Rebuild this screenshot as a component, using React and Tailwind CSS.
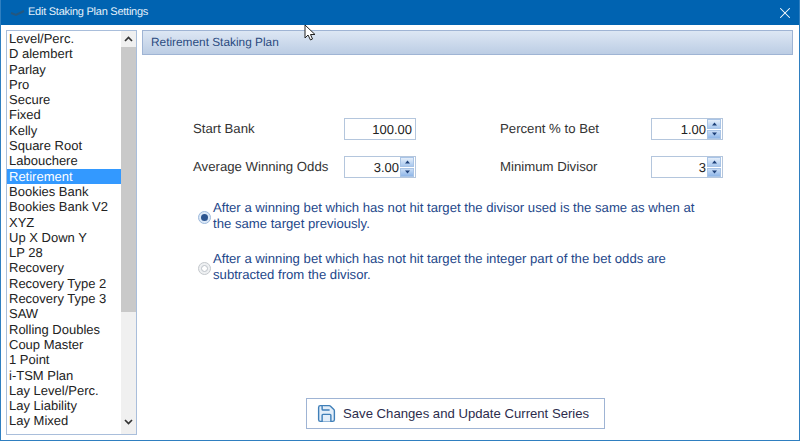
import { Save, X } from "lucide-react";

const PLANS = [
  "Level/Perc.", "D alembert", "Parlay", "Pro", "Secure", "Fixed", "Kelly", "Square Root", "Labouchere",
  "Retirement", "Bookies Bank", "Bookies Bank V2", "XYZ", "Up X Down Y", "LP 28", "Recovery", "Recovery Type 2",
  "Recovery Type 3", "SAW", "Rolling Doubles", "Coup Master", "1 Point", "i-TSM Plan", "Lay Level/Perc.",
  "Lay Liability", "Lay Mixed",
];

const Spinner = () => (
  <div className="flex flex-col gap-px w-[14px] h-[20px] my-auto shrink-0">
    <div className="flex-1 flex items-center justify-center bg-gradient-to-b from-[#e4eefa] to-[#a9c8ee] border border-[#a9c4e6]">
      <svg width="7" height="4" viewBox="0 0 7 4"><path d="M3.5 0.5 L6 3.5 H1 Z" fill="#1c3f78" /></svg>
    </div>
    <div className="flex-1 flex items-center justify-center bg-gradient-to-b from-[#c9ddf6] to-[#8fb6e8] border border-[#a9c4e6]">
      <svg width="7" height="4" viewBox="0 0 7 4"><path d="M1 0.5 H6 L3.5 3.5 Z" fill="#1c3f78" /></svg>
    </div>
  </div>
);

const NumberBox = ({ value, spin = true }) => (
  <div className="flex w-[72px] h-[22px] bg-white border border-[#b4c6dd] pr-px">
    <span className={`flex-1 text-right text-[13px] leading-[22px] text-[#222] ${spin ? "pr-[1px]" : "pr-[2px]"}`}>{value}</span>
    {spin && <Spinner />}
  </div>
);

const Field = ({ label, labelWidth, value, spin }) => (
  <div className="flex items-center h-[22px]">
    <span className="text-[13.2px] text-[#333]" style={{ width: labelWidth }}>{label}</span>
    <NumberBox value={value} spin={spin} />
  </div>
);

const RadioOption = ({ checked, children }) => (
  <div className="flex items-center">
    <span className={`w-[13px] h-[13px] rounded-full border flex items-center justify-center shrink-0 mr-[2px] mt-[3px] ${checked ? "border-[#9db9dc] bg-[#dbe8f7]" : "border-[#c4c8cc] bg-[#eef0f2]"}`}>
      <span className={`w-[7px] h-[7px] rounded-full ${checked ? "bg-[#2c5590]" : "border border-[#bcc2c8] bg-white"}`} />
    </span>
    <p className="text-[13.15px] leading-[16px] text-[#24478a] w-[490px]">{children}</p>
  </div>
);

export default function App() {
  return (
    <div className="relative w-[800px] h-[441px] overflow-hidden bg-white border-x border-b border-[#2f7fc0] font-['Liberation_Sans',Arial,sans-serif] [text-rendering:geometricPrecision]">
      {/* barra de titulo */}
      <div className="h-[25px] bg-[#0063b1] flex items-center text-white">
        <svg className="ml-[9px]" width="16" height="10" viewBox="0 0 16 10">
          <path d="M1 5 L6 7 L14 3" stroke="#24577f" strokeWidth="2" fill="none" />
        </svg>
        <span className="ml-[2px] text-[11px] tracking-[-0.25px] text-[#e4f0fa]">Edit Staking Plan Settings</span>
        <X className="ml-auto mr-[5px] w-[18px] h-[18px]" strokeWidth={1.4} />
      </div>

      <div className="flex pt-[5px] pl-[5px] pr-[6px]">
        {/* lista de planes */}
        <div className="relative w-[131px] h-[405px] border border-[#a9bedb] flex overflow-hidden shrink-0">
          <ul className="flex-1 text-[13px] leading-[15.3px] text-[#222]">
            {PLANS.map((plan) => (
              <li key={plan} className={`pl-[2px] h-[15.3px] whitespace-nowrap ${plan === "Retirement" ? "bg-[#3399ff] text-white" : ""}`}>
                {plan}
              </li>
            ))}
          </ul>
          <div className="w-[15px] flex flex-col bg-[#f0f0f0] shrink-0">
            <div className="h-[16px] flex items-center justify-center">
              <svg width="9" height="6" viewBox="0 0 9 6"><path d="M1 5 L4.5 1.5 L8 5" stroke="#333" strokeWidth="1.7" fill="none" /></svg>
            </div>
            <div className="h-[265px] bg-[#c9c9c9]" />
            <div className="mt-auto h-[16px] flex items-center justify-center mb-[4px]">
              <svg width="9" height="6" viewBox="0 0 9 6"><path d="M1 1 L4.5 4.5 L8 1" stroke="#333" strokeWidth="1.7" fill="none" /></svg>
            </div>
          </div>
        </div>

        {/* panel derecho */}
        <div className="flex-1 ml-[5px] flex flex-col h-[405px]">
          <div className="h-[25px] bg-gradient-to-b from-[#dde7f4] to-[#bccde4] border border-[#9fb4d4] flex items-center pl-[8px] text-[11.85px] text-[#2a4a80]">
            Retirement Staking Plan
          </div>

          <div className="mt-[63px] pl-[51px] flex flex-col gap-[16px]">
            <div className="flex">
              <div className="w-[307px]"><Field label="Start Bank" labelWidth={151} value="100.00" spin={false} /></div>
              <Field label="Percent % to Bet" labelWidth={151} value="1.00" />
            </div>
            <div className="flex">
              <div className="w-[307px]"><Field label="Average Winning Odds" labelWidth={151} value="3.00" /></div>
              <Field label="Minimum Divisor" labelWidth={151} value="3" />
            </div>
          </div>

          <div className="mt-[22px] pl-[56px] flex flex-col gap-[19px]">
            <RadioOption checked>
              After a winning bet which has not hit target the divisor used is the same as when at the same target previously.
            </RadioOption>
            <RadioOption>
              After a winning bet which has not hit target the integer part of the bet odds are subtracted from the divisor.
            </RadioOption>
          </div>

          <button className="mt-auto mb-[6px] ml-[164px] w-[299px] h-[31px] shrink-0 bg-white border border-[#9fb4d4] flex items-center pl-[9px] gap-[6px] text-[13.15px] text-[#2c2c4c]">
            <Save className="w-[21px] h-[21px] text-[#3f7fb8] fill-[#e3eef9]" strokeWidth={1.6} />
            Save Changes and Update Current Series
          </button>
        </div>
      </div>

      {/* cursor del raton */}
      <svg className="absolute left-[303px] top-[24px]" width="13" height="18" viewBox="0 0 13 18">
        <path d="M1 1 V14 L4 11 L6.5 16 L8.5 15 L6.5 10.5 H11 Z" fill="#fff" stroke="#222" strokeWidth="1" />
      </svg>
    </div>
  );
}
